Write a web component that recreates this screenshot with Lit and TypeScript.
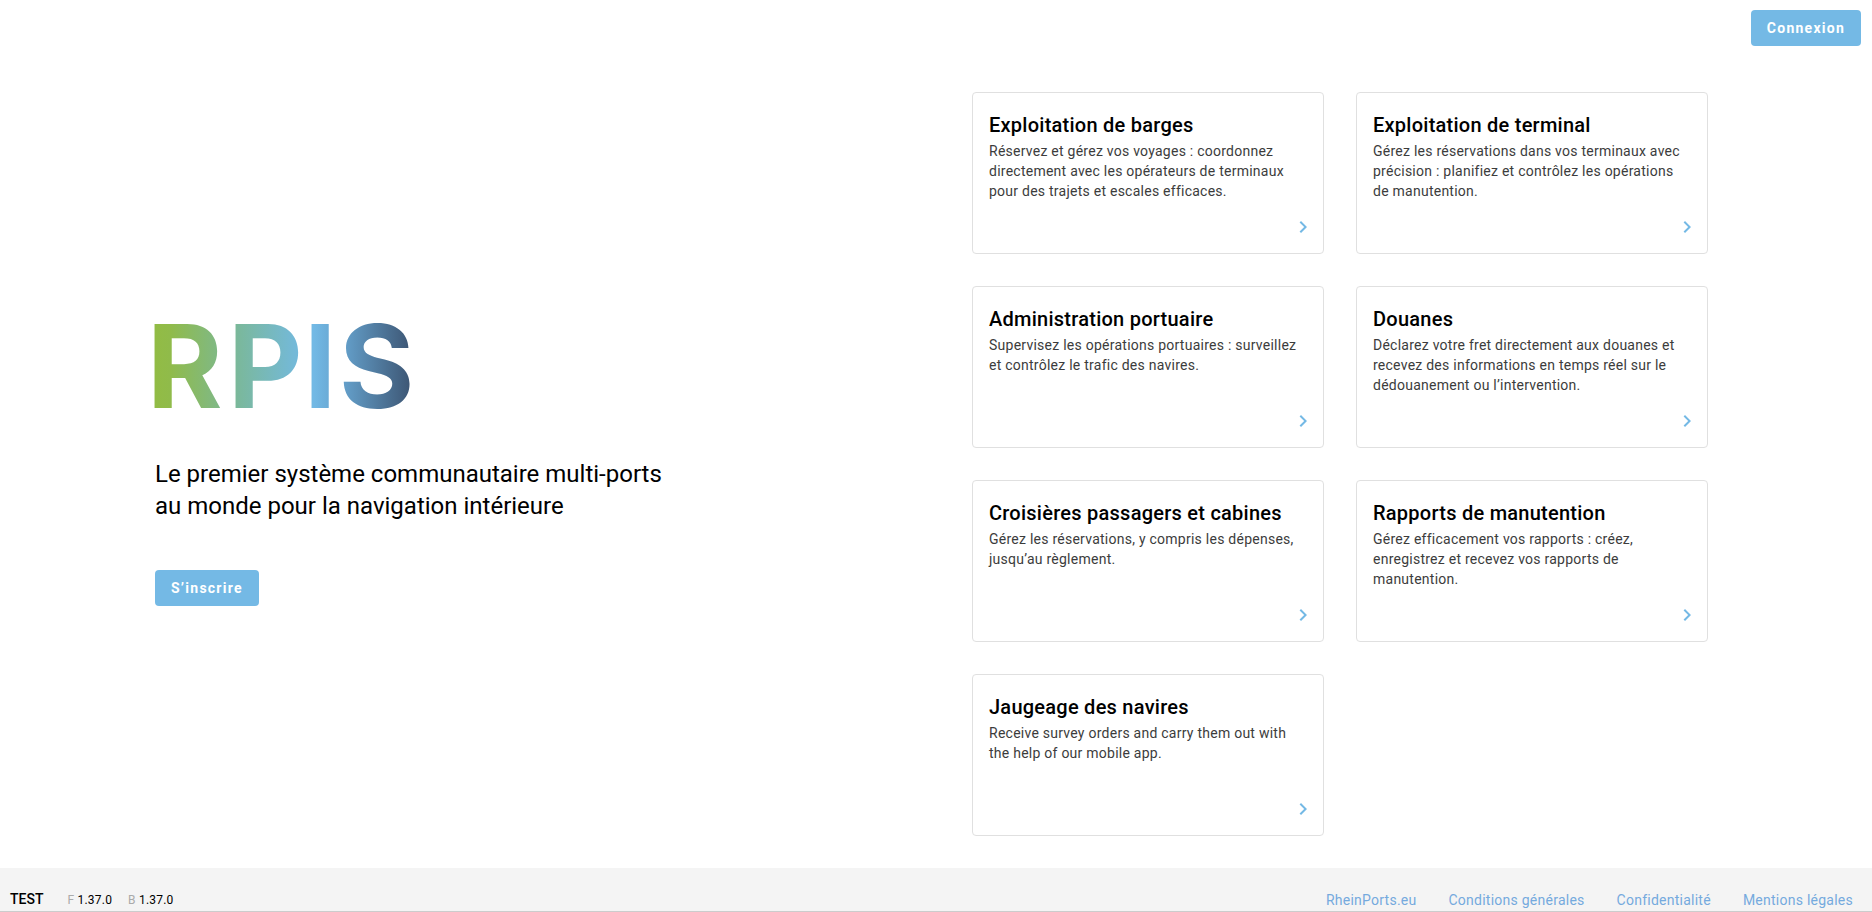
import { LitElement, html, css } from "lit";
import { customElement, property } from "lit/decorators.js";

interface Service {
  title: string;
  text: string;
}

const SERVICES: Service[] = [
  {
    title: "Exploitation de barges",
    text: "Réservez et gérez vos voyages : coordonnez directement avec les opérateurs de terminaux pour des trajets et escales efficaces.",
  },
  {
    title: "Exploitation de terminal",
    text: "Gérez les réservations dans vos terminaux avec précision : planifiez et contrôlez les opérations de manutention.",
  },
  {
    title: "Administration portuaire",
    text: "Supervisez les opérations portuaires : surveillez et contrôlez le trafic des navires.",
  },
  {
    title: "Douanes",
    text: "Déclarez votre fret directement aux douanes et recevez des informations en temps réel sur le dédouanement ou l’intervention.",
  },
  {
    title: "Croisières passagers et cabines",
    text: "Gérez les réservations, y compris les dépenses, jusqu’au règlement.",
  },
  {
    title: "Rapports de manutention",
    text: "Gérez efficacement vos rapports : créez, enregistrez et recevez vos rapports de manutention.",
  },
  {
    title: "Jaugeage des navires",
    text: "Receive survey orders and carry them out with the help of our mobile app.",
  },
];

const LINKS = ["RheinPorts.eu", "Conditions générales", "Confidentialité", "Mentions légales"];

@customElement("service-card")
export class ServiceCard extends LitElement {
  @property() heading = "";
  @property() text = "";

  static styles = css`
    :host {
      display: block;
    }
    .card {
      display: flex;
      flex-direction: column;
      box-sizing: border-box;
      height: 100%;
      min-height: 162px;
      padding: 16px 8px 14px 16px;
      border: 1px solid #e0e0e0;
      border-radius: 4px;
      background: #fff;
      color: #000;
      text-decoration: none;
    }
    .title {
      margin: 0;
      font-size: 20px;
      font-weight: 500;
      line-height: 32px;
      letter-spacing: 0.0125em;
    }
    .text {
      margin: 0 8px 0 0;
      font-size: 14px;
      line-height: 20px;
      letter-spacing: 0.0178em;
      color: #3c3c3c;
    }
    .arrow {
      display: block;
      width: 24px;
      height: 24px;
      margin: auto 0 0 auto;
      fill: #74b9e5;
    }
  `;

  render() {
    return html`
      <a class="card" href="#">
        <h2 class="title">${this.heading}</h2>
        <p class="text">${this.text}</p>
        <svg class="arrow" viewBox="0 0 24 24" aria-hidden="true">
          <path d="M8.59 16.58 13.17 12 8.59 7.41 10 6l6 6-6 6-1.41-1.42Z" />
        </svg>
      </a>
    `;
  }
}

@customElement("app-root")
export class AppRoot extends LitElement {
  static styles = css`
    :host {
      display: flex;
      flex-direction: column;
      min-height: 100vh;
      font-family: Roboto, "Liberation Sans", sans-serif;
      color: #000;
      background: #fff;
    }
    .top {
      display: flex;
      justify-content: flex-end;
      padding: 10px 11px;
    }
    .button {
      height: 36px;
      padding: 0 16px;
      border: 0;
      border-radius: 4px;
      background: #74b9e5;
      color: #fff;
      font: 700 14px/36px Roboto, "Liberation Sans", sans-serif;
      letter-spacing: 0.0892em;
      cursor: pointer;
    }
    .main {
      flex: 1;
      display: grid;
      grid-template-columns: 1fr 1fr;
      padding: 36px 0 32px;
    }
    .intro {
      display: flex;
      flex-direction: column;
      justify-content: center;
      align-items: flex-start;
      padding-left: 155px;
    }
    .logo {
      display: block;
      width: 260px;
      height: 88px;
      overflow: visible;
    }
    .logo-text {
      font: 700 115px Inter, "Liberation Sans", sans-serif;
    }
    .tagline {
      max-width: 520px;
      margin: 48px 0;
      font-size: 24px;
      font-weight: 400;
      line-height: 32px;
    }
    .services {
      display: grid;
      grid-template-columns: 1fr 1fr;
      gap: 32px;
      padding: 0 164px 0 36px;
    }
    .footer {
      display: flex;
      justify-content: space-between;
      align-items: center;
      box-sizing: border-box;
      height: 44px;
      padding: 20px 19px 0 10px;
      border-bottom: 1px solid #ccc;
      background: #f4f4f4;
      font-size: 14px;
      line-height: 20px;
    }
    .versions {
      display: flex;
      align-items: baseline;
      gap: 16px;
    }
    .version {
      font-size: 12px;
      letter-spacing: 0.0178em;
    }
    .env {
      margin-right: 8px;
      font-weight: 500;
    }
    .key {
      color: #aaa;
    }
    .links {
      display: flex;
      gap: 32px;
    }
    .link {
      color: #75aade;
      letter-spacing: 0.0178em;
      text-decoration: none;
    }
  `;

  render() {
    return html`
      <header class="top">
        <button class="button" type="button">Connexion</button>
      </header>
      <main class="main">
        <section class="intro">
          <svg class="logo" viewBox="0 0 260 88" role="img" aria-label="RPIS">
            <defs>
              <linearGradient id="spectrum" gradientUnits="userSpaceOnUse" x1="0" y1="0" x2="256" y2="0">
                <stop offset="0" stop-color="#92bc45" />
                <stop offset="0.06" stop-color="#90bb4a" />
                <stop offset="0.3" stop-color="#7bb895" />
                <stop offset="0.54" stop-color="#74b9d6" />
                <stop offset="0.62" stop-color="#72b9e5" />
                <stop offset="0.75" stop-color="#629cc6" />
                <stop offset="1" stop-color="#3d5674" />
              </linearGradient>
            </defs>
            <text class="logo-text" fill="url(#spectrum)" x="-8 73 149 184" y="86">RPIS</text>
          </svg>
          <p class="tagline">Le premier système communautaire multi-ports au monde pour la navigation intérieure</p>
          <button class="button" type="button">S’inscrire</button>
        </section>
        <section class="services">
          ${SERVICES.map(
            (s) => html`<service-card .heading=${s.title} .text=${s.text}></service-card>`
          )}
        </section>
      </main>
      <footer class="footer">
        <div class="versions">
          <span class="env">TEST</span>
          <span class="version"><span class="key">F</span> 1.37.0</span>
          <span class="version"><span class="key">B</span> 1.37.0</span>
        </div>
        <nav class="links">
          ${LINKS.map((l) => html`<a class="link" href="#">${l}</a>`)}
        </nav>
      </footer>
    `;
  }
}
